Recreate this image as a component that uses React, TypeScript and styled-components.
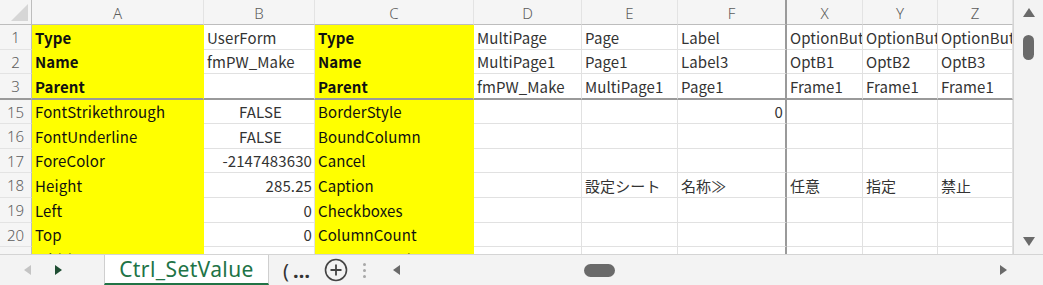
import React from "react";
import styled, { createGlobalStyle } from "styled-components";

const GlobalStyle = createGlobalStyle`
  html, body { margin: 0; padding: 0; background: #ffffff; }
  body { font-family: "Noto Sans CJK JP", "Noto Sans", sans-serif; }
  * { box-sizing: border-box; }
`;

const columns = ["A", "B", "C", "D", "E", "F", "X", "Y", "Z"];
const widths = [172, 111, 159, 108, 96, 109, 76, 75, 75];
const yellowCols = [0, 2];
const freezeCol = 5;

type Align = "left" | "right" | "center";
type RowData = { num: string; height: number; cells: string[]; bold?: boolean; freeze?: boolean };

const rows: RowData[] = [
  { num: "1", height: 25, bold: true, cells: ["Type", "UserForm", "Type", "MultiPage", "Page", "Label", "OptionButton", "OptionButton", "OptionButton"] },
  { num: "2", height: 24, bold: true, cells: ["Name", "fmPW_Make", "Name", "MultiPage1", "Page1", "Label3", "OptB1", "OptB2", "OptB3"] },
  { num: "3", height: 26, bold: true, freeze: true, cells: ["Parent", "", "Parent", "fmPW_Make", "MultiPage1", "Page1", "Frame1", "Frame1", "Frame1"] },
  { num: "15", height: 24, cells: ["FontStrikethrough", "FALSE", "BorderStyle", "", "", "0", "", "", ""] },
  { num: "16", height: 25, cells: ["FontUnderline", "FALSE", "BoundColumn", "", "", "", "", "", ""] },
  { num: "17", height: 24, cells: ["ForeColor", "-2147483630", "Cancel", "", "", "", "", "", ""] },
  { num: "18", height: 25, cells: ["Height", "285.25", "Caption", "", "設定シート", "名称≫", "任意", "指定", "禁止"] },
  { num: "19", height: 25, cells: ["Left", "0", "Checkboxes", "", "", "", "", "", ""] },
  { num: "20", height: 24, cells: ["Top", "0", "ColumnCount", "", "", "", "", "", ""] },
  { num: "21", height: 25, cells: ["Width", "347.5", "ColumnHeads", "", "", "", "", "", ""] },
];

const alignFor = (v: string): Align =>
  v === "FALSE" || v === "TRUE" ? "center" : /^-?[\d.]+$/.test(v) ? "right" : "left";

const justify = { left: "flex-start", right: "flex-end", center: "center" };

const Page = styled.div`
  width: 1043px;
  height: 285px;
  display: flex;
  flex-direction: column;
  overflow: hidden;
  background: #f3f3f3;
`;

const SheetArea = styled.div`
  height: 254px;
  display: flex;
  background: #ffffff;
`;

const Grid = styled.div`
  width: 1014px;
  height: 254px;
  overflow: hidden;
  border-right: 1px solid #d4d4d4;
`;

const Row = styled.div<{ $h: number }>`
  display: grid;
  grid-template-columns: 32px ${widths.map((w) => `${w}px`).join(" ")};
  height: ${(p) => p.$h}px;
`;

const Corner = styled.div`
  position: relative;
  background: #f5f5f5;
  border-right: 1px solid #bdbdbd;
  border-bottom: 1px solid #bdbdbd;
  &::after {
    content: "";
    position: absolute;
    right: 3px;
    bottom: 3px;
    border-left: 17px solid transparent;
    border-bottom: 17px solid #d6d6d6;
  }
`;

const ColHead = styled.div<{ $freeze?: boolean }>`
  background: #f5f5f5;
  border-right: ${(p) => (p.$freeze ? "2px solid #9a9a9a" : "1px solid #e3e3e3")};
  border-bottom: 1px solid #bdbdbd;
  display: flex;
  align-items: center;
  justify-content: center;
  font-family: "Noto Sans", sans-serif;
  font-size: 15px;
  font-weight: 300;
  color: #5c5c5c;
  padding-top: 1px;
`;

const RowHead = styled.div<{ $freeze?: boolean }>`
  background: #f5f5f5;
  border-right: 1px solid #bdbdbd;
  border-bottom: ${(p) => (p.$freeze ? "2px solid #9a9a9a" : "1px solid #e3e3e3")};
  display: flex;
  align-items: center;
  justify-content: center;
  font-family: "Noto Sans", sans-serif;
  font-size: 15px;
  font-weight: 300;
  color: #5c5c5c;
`;

const Cell = styled.div<{ $yellow?: boolean; $bold?: boolean; $align: Align; $freezeR?: boolean; $freezeB?: boolean }>`
  background: ${(p) => (p.$yellow ? "#ffff00" : "#ffffff")};
  border-right: ${(p) => (p.$freezeR ? "2px solid #9a9a9a" : p.$yellow ? "1px solid #ffff00" : "1px solid #e1e1e1")};
  border-bottom: ${(p) => (p.$freezeB ? "2px solid #9a9a9a" : p.$yellow ? "1px solid #ffff00" : "1px solid #e1e1e1")};
  display: flex;
  align-items: center;
  justify-content: ${(p) => justify[p.$align]};
  padding: 0 ${(p) => (p.$align === "right" ? "2px" : "0")} 0 3px;
  overflow: hidden;
  white-space: nowrap;
  font-size: 15px;
  font-weight: ${(p) => (p.$bold ? 700 : 400)};
  color: ${(p) => (p.$yellow ? "#111111" : "#333333")};
  letter-spacing: 0.1px;
`;

const VScroll = styled.div`
  flex: 1;
  background: #f3f3f3;
  display: flex;
  flex-direction: column;
  align-items: center;
  padding-top: 8px;
`;

const Thumb = styled.div`
  width: 11px;
  height: 25px;
  border-radius: 6px;
  background: #6a6a6a;
  margin-top: 18px;
`;

const Spacer = styled.div`
  flex: 1;
`;

const Tri = styled.div<{ $dir: "up" | "down" }>`
  width: 0;
  height: 0;
  border-left: 6px solid transparent;
  border-right: 6px solid transparent;
  ${(p) => (p.$dir === "up" ? "border-bottom: 9px solid #6a6a6a;" : "border-top: 9px solid #6a6a6a;")}
`;

const DownWrap = styled.div`
  margin-bottom: 8px;
`;

const TabBar = styled.div`
  height: 31px;
  display: flex;
  align-items: center;
  background: #f3f3f3;
  border-top: 1px solid #d4d4d4;
`;

const Nav = styled.div`
  width: 104px;
  display: flex;
  align-items: center;
  padding-left: 24px;
  gap: 24px;
`;

const SmallTri = styled.div<{ $left?: boolean; $color: string }>`
  width: 0;
  height: 0;
  border-top: 5px solid transparent;
  border-bottom: 5px solid transparent;
  ${(p) => (p.$left ? `border-right: 7px solid ${p.$color};` : `border-left: 7px solid ${p.$color};`)}
`;

const Tab = styled.div`
  width: 165px;
  height: 30px;
  align-self: flex-start;
  background: #ffffff;
  border-left: 1px solid #cfcfcf;
  border-right: 1px solid #cfcfcf;
  border-bottom: 2px solid #217346;
  display: flex;
  align-items: center;
  justify-content: center;
  font-family: "Noto Sans", sans-serif;
  font-size: 21px;
  letter-spacing: 0.4px;
  color: #217346;
  padding-bottom: 1px;
`;

const MoreTabs = styled.div`
  margin-left: 14px;
  display: flex;
  align-items: center;
  gap: 4px;
  font-family: "Noto Sans", sans-serif;
  font-size: 20px;
  color: #333;
`;

const Dots = styled.span`
  font-weight: 700;
`;

const AddButton = styled.div`
  margin-left: 14px;
  display: flex;
  align-items: center;
`;

const VDots = styled.div`
  margin-left: 15px;
  display: flex;
  flex-direction: column;
  gap: 3px;
  & > span {
    width: 3px;
    height: 3px;
    border-radius: 50%;
    background: #a8a8a8;
  }
`;

const HScroll = styled.div`
  flex: 1;
  display: flex;
  align-items: center;
  padding-left: 27px;
  padding-right: 36px;
`;

const HThumb = styled.div`
  width: 31px;
  height: 13px;
  border-radius: 7px;
  background: #6a6a6a;
  margin-left: 184px;
`;

const App = () => (
  <>
    <GlobalStyle />
    <Page>
      <SheetArea>
        <Grid>
          <Row $h={25}>
            <Corner />
            {columns.map((c, i) => (
              <ColHead key={c} $freeze={i === freezeCol}>
                {c}
              </ColHead>
            ))}
          </Row>
          {rows.map((r) => (
            <Row key={r.num} $h={r.height}>
              <RowHead $freeze={r.freeze}>{r.num}</RowHead>
              {r.cells.map((v, i) => {
                const yellow = yellowCols.includes(i);
                return (
                  <Cell
                    key={i}
                    $yellow={yellow}
                    $bold={r.bold && yellow}
                    $align={alignFor(v)}
                    $freezeR={i === freezeCol}
                    $freezeB={r.freeze}
                  >
                    {v}
                  </Cell>
                );
              })}
            </Row>
          ))}
        </Grid>
        <VScroll>
          <Tri $dir="up" />
          <Thumb />
          <Spacer />
          <DownWrap>
            <Tri $dir="down" />
          </DownWrap>
        </VScroll>
      </SheetArea>
      <TabBar>
        <Nav>
          <SmallTri $left $color="#c4c4c4" />
          <SmallTri $color="#1f4d33" />
        </Nav>
        <Tab>Ctrl_SetValue</Tab>
        <MoreTabs>
          <span>(</span>
          <Dots>…</Dots>
        </MoreTabs>
        <AddButton>
          <svg width="24" height="24" viewBox="0 0 24 24">
            <circle cx="12" cy="12" r="10.5" fill="none" stroke="#444" strokeWidth="1.6" />
            <path d="M12 6.5v11M6.5 12h11" stroke="#444" strokeWidth="1.8" />
          </svg>
        </AddButton>
        <VDots>
          <span />
          <span />
          <span />
        </VDots>
        <HScroll>
          <SmallTri $left $color="#6a6a6a" />
          <HThumb />
          <Spacer />
          <SmallTri $color="#6a6a6a" />
        </HScroll>
      </TabBar>
    </Page>
  </>
);

export default App;
